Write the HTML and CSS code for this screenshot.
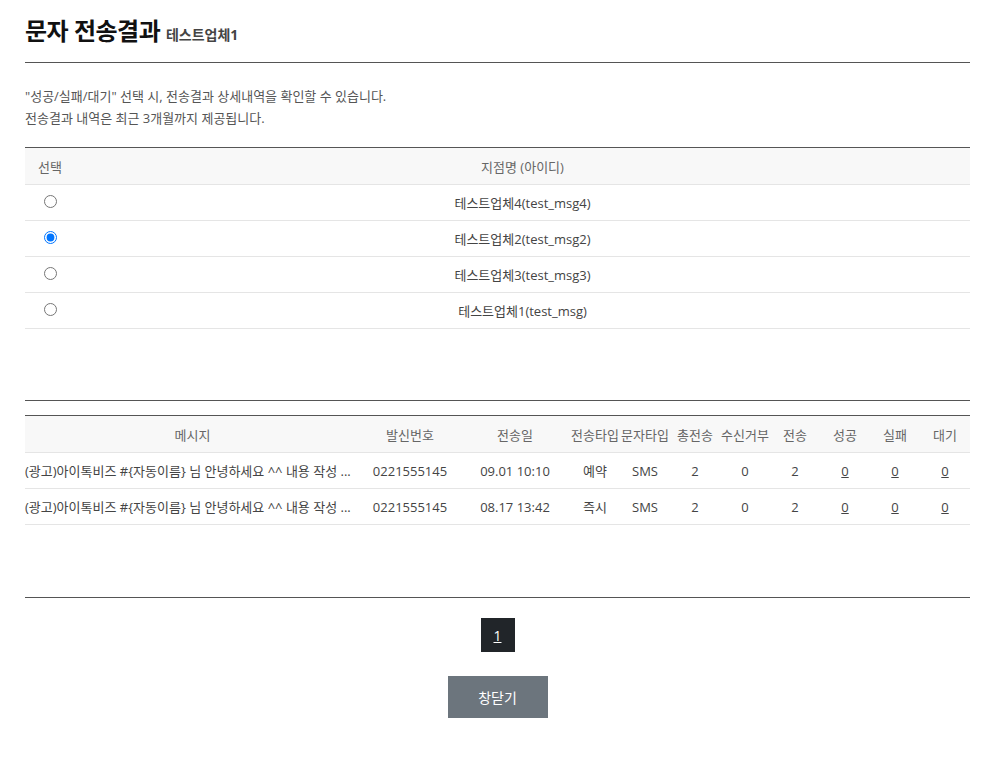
FILE: index.html
```html
<!DOCTYPE html>
<html lang="ko">
<head>
    <meta charset="UTF-8">
    <meta name="viewport" content="width=device-width, initial-scale=1.0">
    <title>문자 전송결과</title>
    <link rel="stylesheet" href="styles.css">
</head>
<body>
    <div class="wrap">
        <div class="title-bar">
            <h1>문자 전송결과 <span class="sub">테스트업체1</span></h1>
        </div>

        <div class="desc">
            <p>"성공/실패/대기" 선택 시, 전송결과 상세내역을 확인할 수 있습니다.</p>
            <p>전송결과 내역은 최근 3개월까지 제공됩니다.</p>
        </div>

        <table class="list branch">
            <thead>
                <tr>
                    <th class="col-sel">선택</th>
                    <th>지점명 (아이디)</th>
                </tr>
            </thead>
            <tbody>
                <tr>
                    <td><input type="radio" name="branch"></td>
                    <td>테스트업체4(test_msg4)</td>
                </tr>
                <tr>
                    <td><input type="radio" name="branch" checked></td>
                    <td>테스트업체2(test_msg2)</td>
                </tr>
                <tr>
                    <td><input type="radio" name="branch"></td>
                    <td>테스트업체3(test_msg3)</td>
                </tr>
                <tr>
                    <td><input type="radio" name="branch"></td>
                    <td>테스트업체1(test_msg)</td>
                </tr>
            </tbody>
        </table>

        <div class="result">
            <table class="list send">
                <thead>
                    <tr>
                        <th class="col-msg">메시지</th>
                        <th class="col-num">발신번호</th>
                        <th class="col-date">전송일</th>
                        <th class="col-s">전송타입</th>
                        <th class="col-s">문자타입</th>
                        <th class="col-s">총전송</th>
                        <th class="col-s">수신거부</th>
                        <th class="col-s">전송</th>
                        <th class="col-s">성공</th>
                        <th class="col-s">실패</th>
                        <th class="col-s">대기</th>
                    </tr>
                </thead>
                <tbody>
                    <tr>
                        <td class="msg"><div>(광고)아이톡비즈 #{자동이름} 님 안녕하세요 ^^ 내용 작성 ...</div></td>
                        <td>0221555145</td>
                        <td>09.01 10:10</td>
                        <td>예약</td>
                        <td>SMS</td>
                        <td>2</td>
                        <td>0</td>
                        <td>2</td>
                        <td><a href="#">0</a></td>
                        <td><a href="#">0</a></td>
                        <td><a href="#">0</a></td>
                    </tr>
                    <tr>
                        <td class="msg"><div>(광고)아이톡비즈 #{자동이름} 님 안녕하세요 ^^ 내용 작성 ...</div></td>
                        <td>0221555145</td>
                        <td>08.17 13:42</td>
                        <td>즉시</td>
                        <td>SMS</td>
                        <td>2</td>
                        <td>0</td>
                        <td>2</td>
                        <td><a href="#">0</a></td>
                        <td><a href="#">0</a></td>
                        <td><a href="#">0</a></td>
                    </tr>
                </tbody>
            </table>
        </div>

        <div class="paging">
            <a href="#" class="on">1</a>
        </div>

        <div class="btns">
            <button type="button" class="btn-close">창닫기</button>
        </div>
    </div>
</body>
</html>
```

FILE: styles.css
```css
body {
    margin: 0;
    font-family: "Open Sans", "Noto Sans CJK KR", sans-serif;
    font-size: 13px;
    color: #444;
    background-color: #fff;
}

.wrap {
    width: 945px;
    margin-left: 25px;
}

.title-bar {
    padding: 15px 0;
    border-bottom: 1px solid #555;
}

h1 {
    margin: 0;
    height: 32px;
    font-size: 24px;
    line-height: 32px;
    font-weight: bold;
    color: #111;
    letter-spacing: -0.5px;
}

h1 .sub {
    font-size: 14px;
    line-height: 1;
    color: #444;
    letter-spacing: 0;
}

.desc {
    margin-top: 22px;
    color: #555;
}

.desc p {
    margin: 0;
    line-height: 22px;
}

table.list {
    width: 100%;
    border-collapse: collapse;
    table-layout: fixed;
    border-top: 1px solid #555;
}

table.list th {
    height: 36px;
    padding: 0;
    font-weight: normal;
    color: #666;
    background-color: #f8f8f8;
    border-bottom: 1px solid #e5e5e5;
    white-space: nowrap;
}

table.list td {
    height: 35px;
    padding: 0;
    text-align: center;
    border-bottom: 1px solid #e5e5e5;
    white-space: nowrap;
}

.branch {
    margin-top: 18px;
}

.branch .col-sel {
    width: 50px;
}

.branch input[type="radio"] {
    margin: 0;
    width: 13px;
    height: 13px;
    vertical-align: middle;
    position: relative;
    top: -3px;
}

.result {
    margin-top: 71px;
    padding-top: 14px;
    border-top: 1px solid #555;
}

.send .col-msg { width: 335px; }
.send .col-num { width: 100px; }
.send .col-date { width: 110px; }
.send .col-s { width: 50px; }

.send td.msg div {
    overflow: hidden;
    text-overflow: ellipsis;
    white-space: nowrap;
    text-align: left;
    padding-right: 6px;
}

.send a {
    color: #444;
}

.paging {
    margin-top: 72px;
    padding-top: 20px;
    border-top: 1px solid #555;
    display: flex;
    justify-content: center;
}

.paging a {
    display: flex;
    align-items: center;
    justify-content: center;
    width: 34px;
    height: 34px;
    background-color: #212529;
    color: #fff;
    font-size: 14px;
}

.btns {
    margin-top: 24px;
    display: flex;
    justify-content: center;
}

.btn-close {
    width: 100px;
    height: 42px;
    border: none;
    background-color: #6c757d;
    color: #fff;
    font-family: inherit;
    font-size: 14px;
    cursor: pointer;
}
```
